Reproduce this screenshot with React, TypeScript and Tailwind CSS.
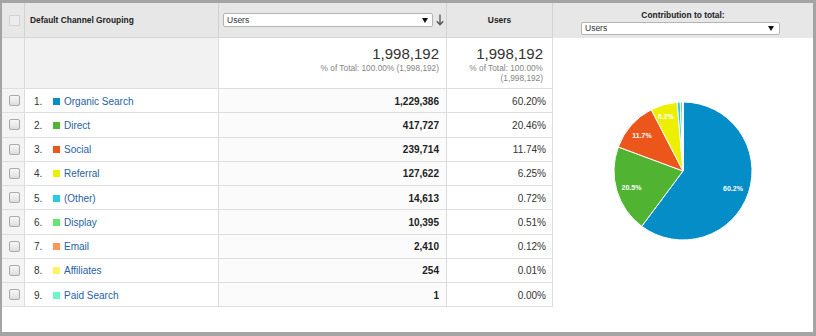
import React from "react";

const rows = [
  { n: 1, label: "Organic Search", color: "#058dc7", users: "1,229,386", pct: "60.20%", v: 60.2 },
  { n: 2, label: "Direct", color: "#50b432", users: "417,727", pct: "20.46%", v: 20.46 },
  { n: 3, label: "Social", color: "#ed561b", users: "239,714", pct: "11.74%", v: 11.74 },
  { n: 4, label: "Referral", color: "#edef00", users: "127,622", pct: "6.25%", v: 6.25 },
  { n: 5, label: "(Other)", color: "#24cbe5", users: "14,613", pct: "0.72%", v: 0.72 },
  { n: 6, label: "Display", color: "#64e572", users: "10,395", pct: "0.51%", v: 0.51 },
  { n: 7, label: "Email", color: "#ff9655", users: "2,410", pct: "0.12%", v: 0.12 },
  { n: 8, label: "Affiliates", color: "#fff263", users: "254", pct: "0.01%", v: 0.01 },
  { n: 9, label: "Paid Search", color: "#6af9c4", users: "1", pct: "0.00%", v: 0 },
];

const labels = [
  { t: "60.2%", x: 180, y: 150 },
  { t: "20.5%", x: 78.5, y: 149 },
  { t: "11.7%", x: 89, y: 97 },
  { t: "6.2%", x: 113, y: 78 },
];

function Checkbox({ disabled }: { disabled?: boolean }) {
  return (
    <div
      className={
        disabled
          ? "w-[11px] h-[11px] border border-[#d2d2d2] bg-[#ececec]"
          : "w-[11px] h-[11px] rounded-[2px] border border-[#a9a9a9] bg-gradient-to-b from-[#f7f7f7] to-[#dedede]"
      }
    />
  );
}

function Caret() {
  return (
    <svg width="6" height="5" viewBox="0 0 6 5">
      <path d="M0 0 H6 L3 5 Z" fill="#111" />
    </svg>
  );
}

function Pie() {
  const cx = 130;
  const cy = 133;
  const r = 69;
  let acc = 0;
  const slices = rows
    .filter((s) => s.v > 0)
    .map((s) => {
      const a0 = (acc / 100) * Math.PI * 2;
      acc += s.v;
      const a1 = (acc / 100) * Math.PI * 2;
      const x0 = cx + r * Math.sin(a0);
      const y0 = cy - r * Math.cos(a0);
      const x1 = cx + r * Math.sin(a1);
      const y1 = cy - r * Math.cos(a1);
      const large = a1 - a0 > Math.PI ? 1 : 0;
      return { d: `M${cx} ${cy} L${x0} ${y0} A${r} ${r} 0 ${large} 1 ${x1} ${y1} Z`, color: s.color };
    });
  return (
    <svg width="260" height="294" viewBox="0 0 260 294">
      {slices.map((s, i) => (
        <path key={i} d={s.d} fill={s.color} stroke="#fff" strokeWidth="1" strokeLinejoin="round" />
      ))}
      {labels.map((l) => (
        <text
          key={l.t}
          x={l.x}
          y={l.y}
          textAnchor="middle"
          dominantBaseline="central"
          fill="#fff"
          fontSize="7"
          fontWeight="bold"
          fontFamily="'Liberation Sans', Arial, sans-serif"
        >
          {l.t}
        </text>
      ))}
    </svg>
  );
}

export default function App() {
  return (
    <div className="w-[816px] h-[336px] bg-[#a4a4a4] pt-[3px] pl-[2px] pr-[3px] pb-[4px] font-['Liberation_Sans',Arial,sans-serif]">
      <div className="flex h-full bg-white">
        {/* table */}
        <div className="w-[551px] flex flex-col">
          {/* header */}
          <div className="grid grid-cols-[23px_194px_228px_106px] h-[35px] bg-[#e7e7e7] border-b border-[#d6d6d6]">
            <div className="flex items-center pl-[7px] border-r border-[#d2d2d2]">
              <Checkbox disabled />
            </div>
            <div className="flex items-center pl-[5px] border-r border-[#d2d2d2] text-[8.4px] font-bold text-[#222]">
              Default Channel Grouping
            </div>
            <div className="flex items-center pl-[4px] border-r border-[#d2d2d2]">
              <div className="w-[210px] h-[14px] flex items-center justify-between pl-[3px] pr-[4px] bg-white border border-[#b5b5b5] rounded-[2px] text-[8.5px] text-[#333]">
                <span>Users</span>
                <Caret />
              </div>
              <svg width="8" height="12" viewBox="0 0 8 12" className="ml-[3px]">
                <path d="M4 0.5 V10.5 M0.8 7.2 L4 10.8 L7.2 7.2" stroke="#555" strokeWidth="1.3" fill="none" />
              </svg>
            </div>
            <div className="flex items-center justify-center border-r border-[#d2d2d2] text-[8.4px] font-bold text-[#222]">
              Users
            </div>
          </div>
          {/* totals */}
          <div className="grid grid-cols-[23px_194px_228px_106px] h-[51px] border-b border-[#dedede]">
            <div className="bg-[#f2f2f2] border-r border-[#dcdcdc]" />
            <div className="bg-[#f2f2f2] border-r border-[#dcdcdc]" />
            <div className="flex flex-col items-end pt-[7px] pr-[7px] border-r border-[#dcdcdc]">
              <div className="text-[15px] leading-[17px] text-[#333]">1,998,192</div>
              <div className="text-[8.3px] leading-[10px] text-[#858585] mt-[1px]">% of Total: 100.00% (1,998,192)</div>
            </div>
            <div className="flex flex-col items-end pt-[7px] pr-[9px] border-r border-[#dcdcdc]">
              <div className="text-[15px] leading-[17px] text-[#333]">1,998,192</div>
              <div className="text-[8.3px] leading-[10px] text-[#858585] mt-[1px] text-right">
                % of Total: 100.00%
                <br />
                (1,998,192)
              </div>
            </div>
          </div>
          {/* rows */}
          {rows.map((r) => (
            <div
              key={r.n}
              className="grid grid-cols-[23px_194px_228px_106px] h-[24.25px] border-b border-[#dedede] text-[10px]"
            >
              <div className="flex items-center pl-[7px] bg-[#f4f4f4] border-r border-[#dcdcdc]">
                <Checkbox />
              </div>
              <div className="flex items-center pl-[9px] pt-[1px] border-r border-[#dcdcdc]">
                <span className="w-[19px] text-[#333]">{r.n}.</span>
                <span className="w-[7px] h-[7px] mr-[4px]" style={{ backgroundColor: r.color }} />
                <span className="text-[#1f62a3]">{r.label}</span>
              </div>
              <div className="flex items-center justify-end pr-[7px] pt-[1px] bg-[#fbfbfb] border-r border-[#dcdcdc] font-bold text-[#222]">
                {r.users}
              </div>
              <div className="flex items-center justify-end pr-[6px] pt-[1px] border-r border-[#dcdcdc] text-[#333]">
                {r.pct}
              </div>
            </div>
          ))}
          <div className="flex-1" />
        </div>
        {/* pie column */}
        <div className="flex-1 flex flex-col">
          <div className="h-[35px] bg-[#e7e7e7] flex flex-col pt-[7px]">
            <div className="text-center text-[8.4px] leading-[10px] font-bold text-[#222]">Contribution to total:</div>
            <div className="ml-[28px] mt-[2px] w-[199px] h-[13px] flex items-center justify-between pl-[3px] pr-[5px] bg-white border border-[#b5b5b5] rounded-[2px] text-[8.5px] text-[#333]">
              <span>Users</span>
              <Caret />
            </div>
          </div>
          <div className="flex-1">
            <Pie />
          </div>
        </div>
      </div>
    </div>
  );
}
